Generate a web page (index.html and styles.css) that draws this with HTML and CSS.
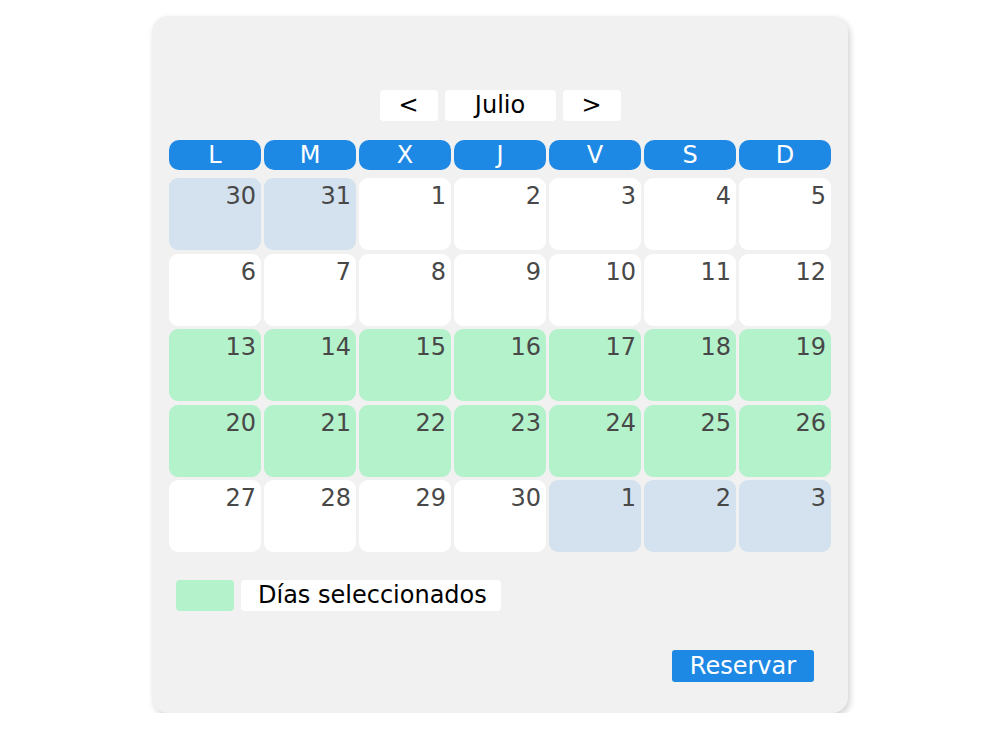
FILE: index.html
```html
<!DOCTYPE html>
<html lang="es">
<head>
<meta charset="utf-8">
<title>Calendario</title>
<link rel="stylesheet" href="styles.css">
</head>
<body>
<div class="card">
  <div class="nav">
    <button class="nav-btn arrow">&lt;</button>
    <div class="nav-btn month">Julio</div>
    <button class="nav-btn arrow">&gt;</button>
  </div>
  <div class="week">
    <div class="wd">L</div><div class="wd">M</div><div class="wd">X</div><div class="wd">J</div><div class="wd">V</div><div class="wd">S</div><div class="wd">D</div>
  </div>
  <div class="days">
    <div class="day other">30</div><div class="day other">31</div><div class="day">1</div><div class="day">2</div><div class="day">3</div><div class="day">4</div><div class="day">5</div>
    <div class="day">6</div><div class="day">7</div><div class="day">8</div><div class="day">9</div><div class="day">10</div><div class="day">11</div><div class="day">12</div>
    <div class="day sel">13</div><div class="day sel">14</div><div class="day sel">15</div><div class="day sel">16</div><div class="day sel">17</div><div class="day sel">18</div><div class="day sel">19</div>
    <div class="day sel">20</div><div class="day sel">21</div><div class="day sel">22</div><div class="day sel">23</div><div class="day sel">24</div><div class="day sel">25</div><div class="day sel">26</div>
    <div class="day">27</div><div class="day">28</div><div class="day">29</div><div class="day">30</div><div class="day other">1</div><div class="day other">2</div><div class="day other">3</div>
  </div>
  <div class="legend">
    <div class="swatch"></div>
    <div class="legend-label">Días seleccionados</div>
  </div>
  <div class="footer">
    <button class="reserve">Reservar</button>
  </div>
</div>
</body>
</html>
```
FILE: styles.css
```css
html, body {
  margin: 0;
  padding: 0;
  background: #ffffff;
  font-family: "DejaVu Sans", sans-serif;
}

.card {
  box-sizing: border-box;
  width: 696px;
  height: 697px;
  margin: 16px auto 0;
  padding: 74px 17px 31px;
  background: #f1f1f1;
  border-radius: 16px;
  box-shadow: 2px 3px 6px rgba(0, 0, 0, 0.18);
  display: flex;
  flex-direction: column;
}

.nav {
  display: flex;
  justify-content: center;
  gap: 7px;
  height: 31px;
}

.nav-btn {
  box-sizing: border-box;
  height: 31px;
  background: #ffffff;
  border: none;
  border-radius: 4px;
  font-family: "DejaVu Sans", sans-serif;
  font-size: 24px;
  line-height: 31px;
  color: #000000;
  text-align: center;
  padding: 0;
}

.arrow {
  width: 58px;
}

.month {
  width: 111px;
}

.week {
  margin-top: 19px;
  display: grid;
  grid-template-columns: repeat(7, 92px);
  column-gap: 3px;
}

.wd {
  height: 30px;
  line-height: 30px;
  background: #1e88e5;
  color: #ffffff;
  border-radius: 10px;
  text-align: center;
  font-size: 24px;
}

.days {
  margin-top: 8px;
  display: grid;
  grid-template-columns: repeat(7, 92px);
  grid-auto-rows: 72px;
  column-gap: 3px;
  row-gap: 3.5px;
}

.day {
  box-sizing: border-box;
  background: #ffffff;
  border-radius: 9px;
  padding: 4px 5px 0 0;
  text-align: right;
  font-size: 24px;
  color: #484848;
}

.day.other {
  background: #d3e2ee;
}

.day.sel {
  background: #b4f2cb;
}

.legend {
  margin-top: 28px;
  padding-left: 7px;
  display: flex;
  gap: 7px;
  height: 31px;
}

.swatch {
  width: 58px;
  height: 31px;
  background: #b4f2cb;
  border-radius: 4px;
}

.legend-label {
  height: 31px;
  line-height: 31px;
  padding: 0 14px 0 17px;
  background: #ffffff;
  border-radius: 4px;
  font-size: 24px;
  color: #000000;
}

.footer {
  margin-top: 39px;
  display: flex;
  justify-content: flex-end;
  padding-right: 17px;
}

.reserve {
  height: 32px;
  width: 142px;
  padding: 0;
  border: none;
  border-radius: 3px;
  background: #1e88e5;
  color: #ffffff;
  font-family: "DejaVu Sans", sans-serif;
  font-size: 24px;
  line-height: 32px;
  text-align: center;
}
```
